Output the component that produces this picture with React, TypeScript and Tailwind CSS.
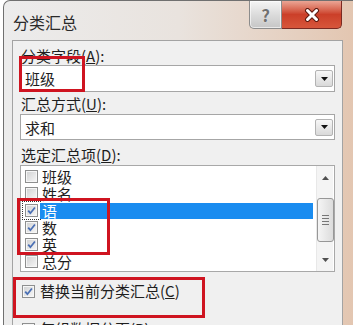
import React from "react";

type CheckProps = { checked?: boolean; focus?: boolean };

const Check = ({ checked = false, focus = false }: CheckProps) => (
  <span
    className={
      focus
        ? "w-[13px] h-[13px] shrink-0 border border-[#8e8f8f] bg-gradient-to-br from-[#cfd0d1] to-[#f8f8f8] shadow-[inset_0_0_0_1px_#f6f6f6] flex items-center justify-center outline-1 outline-dotted outline-[#333] outline-offset-[2px]"
        : "w-[13px] h-[13px] shrink-0 border border-[#8e8f8f] bg-gradient-to-br from-[#cfd0d1] to-[#f8f8f8] shadow-[inset_0_0_0_1px_#f6f6f6] flex items-center justify-center"
    }
  >
    {checked && (
      <svg width="9" height="9" viewBox="0 0 9 9">
        <path d="M1.2 4.6 L3.4 7.2 L7.9 1.5" fill="none" stroke="#4a6fb4" strokeWidth="1.8" />
      </svg>
    )}
  </span>
);

const DropButton = () => (
  <div className="w-[18px] h-[17px] border border-[#b3b3b3] rounded-[2px] bg-gradient-to-b from-[#f7f7f7] to-[#d9d9d9] flex items-center justify-center">
    <svg width="7" height="4" viewBox="0 0 7 4">
      <path d="M0 0h7L3.5 4z" fill="#111" />
    </svg>
  </div>
);

type ComboProps = { value: string; height: string };

const Combo = ({ value, height }: ComboProps) => (
  <div className={`${height} bg-white border border-[#a6a6a6] flex items-center pl-[4px] pr-[1px]`}>
    <span className="flex-1 text-[15px] leading-none">{value}</span>
    <DropButton />
  </div>
);

const items = [
  { name: "班级", checked: false },
  { name: "姓名", checked: false },
  { name: "语", checked: true, selected: true },
  { name: "数", checked: true },
  { name: "英", checked: true },
  { name: "总分", checked: false },
];

const ScrollBar = () => (
  <div className="w-[17px] mr-[1px] bg-[#f4f4f4] border-l border-[#e8e8e8] flex flex-col items-center">
    <div className="h-[24px] flex items-center justify-center">
      <svg width="7" height="4" viewBox="0 0 7 4">
        <path d="M3.5 0L7 4H0z" fill="#505050" />
      </svg>
    </div>
    <div className="mt-[8px] w-[17px] h-[44px] rounded-[3px] border border-[#979797] bg-gradient-to-r from-[#f5f5f5] to-[#dcdcdc] flex flex-col items-center justify-center gap-[2px]">
      <span className="w-[7px] h-[1px] bg-[#777]" />
      <span className="w-[7px] h-[1px] bg-[#777]" />
      <span className="w-[7px] h-[1px] bg-[#777]" />
      <span className="w-[7px] h-[1px] bg-[#777]" />
    </div>
    <div className="flex-1" />
    <div className="h-[22px] flex items-center justify-center">
      <svg width="7" height="4" viewBox="0 0 7 4">
        <path d="M0 0h7L3.5 4z" fill="#505050" />
      </svg>
    </div>
  </div>
);

export default function App() {
  return (
    <div className="relative w-[353px] h-[325px] bg-white overflow-hidden text-[#1e1e1e] font-[family-name:'Noto_Sans_CJK_SC',sans-serif]">
      <div className="ml-[3px] w-[350px] h-[340px] rounded-tl-[7px] border-l border-t border-[#707070] bg-gradient-to-r from-[#ececec] via-[#e9e3de] to-[#e3c6b1] flex flex-col">
        <div className="h-[39px] flex items-start">
          <span className="pl-[9px] pt-[12px] text-[16px] leading-[18px] text-[#2a2a2a]">分类汇总</span>
          <div className="ml-auto mr-[11px] flex">
            <div className="w-[33px] h-[28px] rounded-bl-[5px] border border-t-0 border-[#8c8c8c] bg-gradient-to-b from-[#f5f5f5] via-[#dcdcdc] to-[#c6c6c6] shadow-[inset_0_0_0_1px_rgba(255,255,255,0.6)] flex items-center justify-center">
              <span className="text-[17px] font-bold leading-none text-[#707070] [text-shadow:0_0_1px_#fff]">?</span>
            </div>
            <div className="w-[60px] h-[28px] rounded-br-[5px] border border-l-0 border-t-0 border-[#7a2a22] bg-gradient-to-b from-[#eaa595] via-[#cb3f29] to-[#d7563b] flex items-center justify-center">
              <svg width="16" height="14" viewBox="0 0 16 14">
                <path d="M3.5 2.5 L12.5 11.5 M12.5 2.5 L3.5 11.5" stroke="#5c1a10" strokeWidth="5" strokeLinecap="round" />
                <path d="M3.5 2.5 L12.5 11.5 M12.5 2.5 L3.5 11.5" stroke="#fff" strokeWidth="3" strokeLinecap="round" />
              </svg>
            </div>
          </div>
        </div>

        <div className="ml-[8px] mr-[10px] flex-1 border border-b-0 border-[#a3a3a3] bg-[#f0f0f0] px-[7px] flex flex-col">
          <div className="mt-[6px] pl-[1px] text-[15px] leading-[18px]">
            分类字段(<span className="underline">A</span>):
          </div>
          <Combo value="班级" height="h-[27px]" />

          <div className="mt-[3px] mb-[1px] pl-[1px] text-[15px] leading-[18px]">
            汇总方式(<span className="underline">U</span>):
          </div>
          <Combo value="求和" height="h-[26px]" />

          <div className="mt-[6px] mb-[1px] pl-[1px] text-[15px] leading-[18px]">
            选定汇总项(<span className="underline">D</span>):
          </div>
          <div className="h-[107px] border border-[#a8a8a8] bg-white flex">
            <div className="flex-1 pt-[2px] pl-[4px] flex flex-col">
              {items.map((it) => (
                <div key={it.name} className="h-[17px] flex items-center">
                  <Check checked={it.checked} focus={!!it.selected} />
                  <span
                    className={
                      it.selected
                        ? "ml-[2px] mr-[3px] flex-1 h-[16px] pl-[2px] bg-[#1a8cf0] text-white text-[15px] leading-[16px]"
                        : "ml-[2px] mr-[3px] flex-1 h-[16px] pl-[2px] text-[15px] leading-[16px]"
                    }
                  >
                    {it.name}
                  </span>
                </div>
              ))}
            </div>
            <ScrollBar />
          </div>

          <div className="mt-[9px] h-[20px] pl-[2px] flex items-center gap-[5px]">
            <Check checked />
            <span className="text-[15px] leading-[20px]">
              替换当前分类汇总(<span className="underline">C</span>)
            </span>
          </div>
          <div className="mt-[18px] h-[20px] pl-[2px] flex items-center gap-[5px]">
            <Check />
            <span className="text-[15px] leading-[20px]">
              每组数据分页(<span className="underline">P</span>)
            </span>
          </div>
        </div>
      </div>

      <div className="absolute left-[19px] top-[56px] w-[66px] h-[36px] border-[3px] border-[#cf1420]" />
      <div className="absolute left-[17px] top-[198px] w-[93px] h-[57px] border-[3px] border-[#cf1420]" />
      <div className="absolute left-[13px] top-[277px] w-[192px] h-[41px] border-[3px] border-[#cf1420]" />
    </div>
  );
}
